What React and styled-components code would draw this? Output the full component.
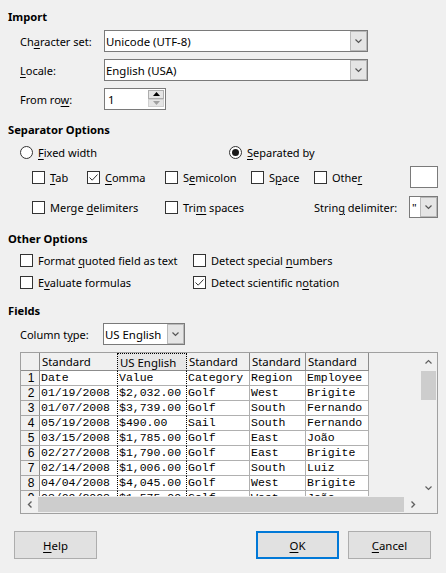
import React from 'react';
import styled, { createGlobalStyle } from 'styled-components';

const Global = createGlobalStyle`
  html, body { margin: 0; padding: 0; background: #f0f0f0; }
  body {
    font-family: "Noto Sans", "Open Sans", sans-serif;
    font-size: 11px;
    color: #000;
  }
`;

const Dialog = styled.div`
  width: 446px;
  height: 573px;
  box-sizing: border-box;
  padding: 7px 8px 0 8px;
  background: #f0f0f0;
  display: flex;
  flex-direction: column;
  overflow: hidden;
`;

const SectionTitle = styled.div`
  height: 20px;
  line-height: 20px;
  font-weight: bold;
  font-size: 11.2px;
  margin-top: ${p => p.$mt || 0}px;
  white-space: nowrap;
`;

const FormRow = styled.div`
  display: flex;
  align-items: center;
  height: 22px;
  margin-top: ${p => p.$mt || 0}px;
  padding-left: 12px;
`;

const FieldLabel = styled.span`
  width: ${p => p.$w}px;
  flex: none;
  white-space: nowrap;
`;

const OptionRow = styled.div`
  display: flex;
  align-items: center;
  height: ${p => p.$h || 20}px;
  margin-top: ${p => p.$mt || 0}px;
  padding-left: ${p => p.$pl || 0}px;
`;

const Option = styled.div`
  display: flex;
  align-items: center;
  gap: 5px;
  width: ${p => (p.$w ? `${p.$w}px` : 'auto')};
  flex: none;
  white-space: nowrap;
`;

const Key = styled.span`
  text-decoration: underline;
  text-underline-offset: 2px;
  text-decoration-thickness: 1px;
`;

const Box = styled.span`
  width: 13px;
  height: 13px;
  box-sizing: border-box;
  border: 1px solid #333;
  background: #fff;
  display: inline-flex;
  align-items: center;
  justify-content: center;
  flex: none;
`;

const RadioCircle = styled.span`
  width: 13px;
  height: 13px;
  box-sizing: border-box;
  border: 1px solid #333;
  border-radius: 50%;
  background: #fff;
  display: inline-flex;
  align-items: center;
  justify-content: center;
  flex: none;
`;

const RadioDot = styled.span`
  width: 7px;
  height: 7px;
  border-radius: 50%;
  background: #1a1a1a;
`;

const ComboBox = styled.div`
  box-sizing: border-box;
  width: ${p => p.$w}px;
  height: 22px;
  border: 1px solid #7a7a7a;
  background: #fff;
  display: flex;
  flex: none;
`;

const ComboText = styled.div`
  flex: 1;
  padding-left: ${p => p.$pl ?? 1}px;
  display: flex;
  align-items: center;
  white-space: nowrap;
  overflow: hidden;
  font-size: 11.4px;
`;

const DropButton = styled.div`
  width: 17px;
  box-sizing: border-box;
  background: #e5e5e5;
  border: 1px solid #b9b9b9;
  display: flex;
  align-items: center;
  justify-content: center;
  flex: none;
`;

const Entry = styled.div`
  box-sizing: border-box;
  width: ${p => p.$w}px;
  height: 22px;
  border: 1px solid #7a7a7a;
  background: #fff;
  flex: none;
`;

const Spin = styled.div`
  box-sizing: border-box;
  width: 62px;
  height: 22px;
  border: 1px solid #7a7a7a;
  background: #fff;
  display: flex;
  flex: none;
`;

const SpinText = styled.div`
  flex: 1;
  padding-left: 3px;
  display: flex;
  align-items: center;
  font-size: 11.4px;
`;

const SpinButtons = styled.div`
  width: 16px;
  display: flex;
  flex-direction: column;
  padding: 1px 1px 2px 0;
`;

const SpinBtn = styled.div`
  flex: 1;
  box-sizing: border-box;
  background: #e5e5e5;
  border: 1px solid ${p => (p.$disabled ? '#d0d0d0' : '#adadad')};
  display: flex;
  align-items: center;
  justify-content: center;
`;

const GridFrame = styled.div`
  margin-top: 7px;
  margin-left: 12px;
  width: 418px;
  height: 162px;
  box-sizing: border-box;
  border: 1px solid #a0a0a0;
  display: grid;
  grid-template-columns: 399px 17px;
  grid-template-rows: 143px 17px;
  background: #f0f0f0;
`;

const Viewport = styled.div`
  overflow: hidden;
  background: #f0f0f0;
`;

const Table = styled.div`
  display: grid;
  grid-template-columns: 19px 78px 69px 63px 56px 63px;
  grid-template-rows: 18px;
  grid-auto-rows: 15px;
  width: max-content;
`;

const HeadCell = styled.div`
  box-sizing: border-box;
  height: 18px;
  border-right: 1px ${p => (p.$sel || p.$beforeSel ? 'dotted #000' : 'solid #8c8c8c')};
  border-bottom: 1px solid #8c8c8c;
  border-top: ${p => (p.$sel ? '1px dotted #000' : 'none')};
  background: ${p => (p.$sel ? '#e6e6e6' : '#f0f0f0')};
  padding-left: 2px;
  line-height: 17px;
  font-size: 11.4px;
  white-space: nowrap;
  overflow: hidden;
`;

const RowHead = styled.div`
  box-sizing: border-box;
  border-right: 1px solid #8c8c8c;
  border-bottom: 1px solid #a8a8a8;
  background: #f0f0f0;
  display: flex;
  align-items: flex-end;
  justify-content: center;
  font-family: "Liberation Sans", Arial, sans-serif;
  line-height: 13px;
  font-size: 12px;
  padding-left: 2px;
  overflow: hidden;
`;

const Cell = styled.div`
  box-sizing: border-box;
  border-right: 1px ${p => (p.$sel || p.$beforeSel ? 'dotted #000' : 'solid #b0b0b0')};
  border-bottom: 1px solid #b0b0b0;
  background: #fff;
  font-family: "Liberation Mono", "DejaVu Sans Mono", monospace;
  font-size: 11.5px;
  line-height: 14px;
  padding-left: 1px;
  white-space: nowrap;
  overflow: hidden;
`;

const VScroll = styled.div`
  display: flex;
  flex-direction: column;
  background: #f0f0f0;
`;

const HScroll = styled.div`
  display: flex;
  background: #f0f0f0;
`;

const ArrowBtn = styled.div`
  width: 17px;
  height: 17px;
  flex: none;
  display: flex;
  align-items: center;
  justify-content: center;
`;

const VTrack = styled.div`
  flex: 1;
  padding: 1px 1px 0 1px;
`;

const VThumb = styled.div`
  height: 29px;
  background: #cdcdcd;
`;

const HTrack = styled.div`
  flex: 1;
  padding: 1px 0 1px 0;
  display: flex;
`;

const HThumb = styled.div`
  width: 366px;
  background: #cdcdcd;
`;

const Corner = styled.div`
  background: #f0f0f0;
`;

const ButtonBar = styled.div`
  margin: 17px -8px 0 -8px;
  padding: 0 15px 0 14px;
  display: flex;
  align-items: center;
`;

const Button = styled.div`
  box-sizing: border-box;
  width: 83px;
  height: 28px;
  background: #e1e1e1;
  border: ${p => (p.$default ? '2px solid #0078d7' : '1px solid #adadad')};
  display: flex;
  align-items: center;
  justify-content: center;
  margin-left: ${p => (p.$push ? 'auto' : p.$ml ? `${p.$ml}px` : '0')};
  flex: none;
  font-size: 11.4px;
`;

const mn = (s) => {
  const i = s.indexOf('_');
  if (i < 0) return s;
  return (
    <>
      {s.slice(0, i)}
      <Key>{s[i + 1]}</Key>
      {s.slice(i + 2)}
    </>
  );
};

const Chevron = ({ dir = 'down', color = '#444' }) => {
  if (dir === 'left' || dir === 'right') {
    const p = dir === 'left' ? '3.5,0.5 0.5,3.5 3.5,6.5' : '0.5,0.5 3.5,3.5 0.5,6.5';
    return (
      <svg width="4" height="7" viewBox="0 0 4 7" style={{ overflow: 'visible' }}>
        <polyline points={p} fill="none" stroke={color} strokeWidth="1.4" />
      </svg>
    );
  }
  const pts = dir === 'up' ? '0.5,3.5 3.5,0.5 6.5,3.5' : '0.5,0.5 3.5,3.5 6.5,0.5';
  return (
    <svg width="7" height="4" viewBox="0 0 7 4" style={{ overflow: 'visible' }}>
      <polyline points={pts} fill="none" stroke={color} strokeWidth="1.2" />
    </svg>
  );
};

const Triangle = ({ up, color }) => (
  <svg width="7" height="4" viewBox="0 0 7 4">
    <polygon points={up ? '0,4 3.5,0 7,4' : '0,0 7,0 3.5,4'} fill={color} />
  </svg>
);

const Check = ({ checked, label, w }) => (
  <Option $w={w}>
    <Box>
      {checked && (
        <svg width="11" height="11" viewBox="0 0 11 11">
          <polyline points="1.5,5.5 4.2,8.2 9.5,2.5" fill="none" stroke="#333" strokeWidth="1" />
        </svg>
      )}
    </Box>
    <span>{mn(label)}</span>
  </Option>
);

const Radio = ({ checked, label, w }) => (
  <Option $w={w}>
    <RadioCircle>{checked && <RadioDot />}</RadioCircle>
    <span>{mn(label)}</span>
  </Option>
);

const Combo = ({ w, text, pl }) => (
  <ComboBox $w={w}>
    <ComboText $pl={pl}>{text}</ComboText>
    <DropButton>
      <Chevron dir="down" color="#555" />
    </DropButton>
  </ComboBox>
);

const headers = ['Standard', 'US English', 'Standard', 'Standard', 'Standard'];
const rows = [
  ['Date', 'Value', 'Category', 'Region', 'Employee'],
  ['01/19/2008', '$2,032.00', 'Golf', 'West', 'Brigite'],
  ['01/07/2008', '$3,739.00', 'Golf', 'South', 'Fernando'],
  ['05/19/2008', '$490.00', 'Sail', 'South', 'Fernando'],
  ['03/15/2008', '$1,785.00', 'Golf', 'East', 'João'],
  ['02/27/2008', '$1,790.00', 'Golf', 'East', 'Brigite'],
  ['02/14/2008', '$1,006.00', 'Golf', 'South', 'Luiz'],
  ['04/04/2008', '$4,045.00', 'Golf', 'West', 'Brigite'],
  ['03/09/2008', '$1,575.00', 'Golf', 'West', 'João'],
];

export default function App() {
  return (
    <>
      <Global />
      <Dialog>
        <SectionTitle>Import</SectionTitle>
        <FormRow $mt={3}>
          <FieldLabel $w={84}>{mn('Ch_aracter set:')}</FieldLabel>
          <Combo w={264} text="Unicode (UTF-8)" />
        </FormRow>
        <FormRow $mt={7}>
          <FieldLabel $w={84}>{mn('_Locale:')}</FieldLabel>
          <Combo w={264} text="English (USA)" />
        </FormRow>
        <FormRow $mt={7}>
          <FieldLabel $w={84}>{mn('From ro_w:')}</FieldLabel>
          <Spin>
            <SpinText>1</SpinText>
            <SpinButtons>
              <SpinBtn>
                <Triangle up color="#000" />
              </SpinBtn>
              <SpinBtn $disabled>
                <Triangle color="#a0a0a0" />
              </SpinBtn>
            </SpinButtons>
          </Spin>
        </FormRow>

        <SectionTitle $mt={10}>Separator Options</SectionTitle>
        <OptionRow $mt={2} $pl={12}>
          <Radio w={209} label="_Fixed width" />
          <Radio checked label="_Separated by" />
        </OptionRow>
        <OptionRow $mt={4} $h={22} $pl={24}>
          <Check w={55} label="_Tab" />
          <Check w={78} checked label="_Comma" />
          <Check w={86} label="S_emicolon" />
          <Check w={63} label="S_pace" />
          <Check w={96} label="Othe_r" />
          <Entry $w={28} />
        </OptionRow>
        <OptionRow $mt={8} $h={22} $pl={24}>
          <Check w={133} label="Merge _delimiters" />
          <Check w={149} label="Tri_m spaces" />
          <FieldLabel $w={95}>{mn('Strin_g delimiter:')}</FieldLabel>
          <Combo w={29} text={'"'} pl={2} />
        </OptionRow>

        <SectionTitle $mt={11}>Other Options</SectionTitle>
        <OptionRow $mt={1} $pl={12}>
          <Check w={173} label="Format _quoted field as text" />
          <Check label="Detect special _numbers" />
        </OptionRow>
        <OptionRow $mt={2} $pl={12}>
          <Check w={173} label="E_valuate formulas" />
          <Check checked label="Detect scientific n_otation" />
        </OptionRow>

        <SectionTitle $mt={9}>Fields</SectionTitle>
        <FormRow $mt={2}>
          <FieldLabel $w={83}>{mn('Column t_ype:')}</FieldLabel>
          <Combo w={82} text="US English" />
        </FormRow>

        <GridFrame>
          <Viewport>
            <Table>
              <HeadCell />
              {headers.map((h, i) => (
                <HeadCell key={i} $sel={i === 1} $beforeSel={i === 0}>
                  {h}
                </HeadCell>
              ))}
              {rows.map((r, ri) => (
                <React.Fragment key={ri}>
                  <RowHead>{ri + 1}</RowHead>
                  {r.map((c, ci) => (
                    <Cell key={ci} $sel={ci === 1} $beforeSel={ci === 0}>
                      {c}
                    </Cell>
                  ))}
                </React.Fragment>
              ))}
            </Table>
          </Viewport>
          <VScroll>
            <ArrowBtn>
              <Chevron dir="up" color="#606060" />
            </ArrowBtn>
            <VTrack>
              <VThumb />
            </VTrack>
            <ArrowBtn>
              <Chevron dir="down" color="#606060" />
            </ArrowBtn>
          </VScroll>
          <HScroll>
            <ArrowBtn>
              <Chevron dir="left" color="#606060" />
            </ArrowBtn>
            <HTrack>
              <HThumb />
            </HTrack>
            <ArrowBtn>
              <Chevron dir="right" color="#606060" />
            </ArrowBtn>
          </HScroll>
          <Corner />
        </GridFrame>

        <ButtonBar>
          <Button>{mn('_Help')}</Button>
          <Button $push $default>
            {mn('_OK')}
          </Button>
          <Button $ml={9}>{mn('_Cancel')}</Button>
        </ButtonBar>
      </Dialog>
    </>
  );
}
